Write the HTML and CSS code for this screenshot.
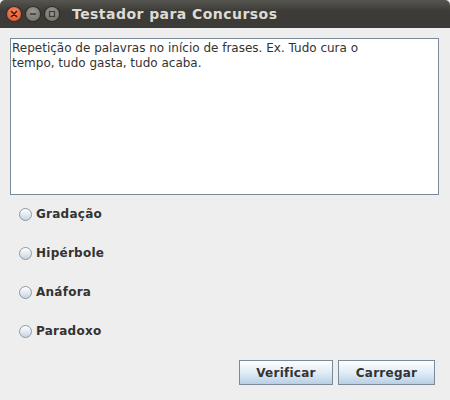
FILE: index.html
```html
<!DOCTYPE html>
<html>
<head>
<meta charset="utf-8">
<link rel="stylesheet" href="styles.css">
</head>
<body>
<div class="window">
  <div class="titlebar">
    <div class="controls">
      <span class="wbtn close"><svg width="14" height="14" viewBox="0 0 14 14"><path d="M4.5 4.5 L9.5 9.5 M9.5 4.5 L4.5 9.5" stroke="#3a1a10" stroke-width="1.6" stroke-linecap="round"/></svg></span>
      <span class="wbtn"><svg width="14" height="14" viewBox="0 0 14 14"><path d="M4 7 H10" stroke="#3c3b37" stroke-width="1.6"/></svg></span>
      <span class="wbtn"><svg width="14" height="14" viewBox="0 0 14 14"><rect x="4.5" y="4.5" width="5" height="5" fill="none" stroke="#3c3b37" stroke-width="1.2"/></svg></span>
    </div>
    <div class="title">Testador para Concursos</div>
  </div>
  <div class="content">
    <div class="textarea">Repetição de palavras no início de frases. Ex. Tudo cura o<br>tempo, tudo gasta, tudo acaba.</div>
    <div class="options">
      <label class="opt"><span class="radio"></span>Gradação</label>
      <label class="opt"><span class="radio"></span>Hipérbole</label>
      <label class="opt"><span class="radio"></span>Anáfora</label>
      <label class="opt"><span class="radio"></span>Paradoxo</label>
    </div>
    <div class="buttons">
      <button class="btn btn-v">Verificar</button>
      <button class="btn btn-c">Carregar</button>
    </div>
  </div>
</div>
</body>
</html>
```
FILE: styles.css
```css
html, body {
  margin: 0;
  padding: 0;
  background: #eeeeee;
}
.window {
  width: 450px;
  height: 400px;
  background: #eeeeee;
  display: flex;
  flex-direction: column;
}
.titlebar {
  height: 28px;
  background: linear-gradient(#57554f, #3c3b37 40%, #3c3b37);
  border-radius: 5px 5px 0 0;
  display: flex;
  align-items: center;
  box-sizing: border-box;
}
.controls {
  display: flex;
  gap: 5px;
  margin-left: 7px;
}
.wbtn {
  width: 14px;
  height: 14px;
  border-radius: 50%;
  background: radial-gradient(circle at 50% 35%, #9a9890, #6d6b65);
  display: block;
  box-shadow: 0 0 0 1px #2f2e2b;
}
.wbtn svg { display: block; }
.wbtn.close {
  background: radial-gradient(circle at 50% 35%, #f7855e, #e0501e);
}
.title {
  margin-left: 13px;
  font-family: "DejaVu Sans", sans-serif;
  font-weight: bold;
  font-size: 14px;
  letter-spacing: 0.45px;
  color: #dfdbd2;
}
.content {
  flex: 1;
  display: flex;
  flex-direction: column;
  padding: 10px 15px 0 10px;
}
.textarea {
  width: 429px;
  height: 157px;
  box-sizing: border-box;
  border: 1px solid #7a8a99;
  background: #ffffff;
  padding: 2px 1px;
  font-family: "DejaVu Sans", sans-serif;
  font-size: 12px;
  line-height: 15px;
  color: #333333;
}
.options {
  display: flex;
  flex-direction: column;
  margin-top: 11px;
  margin-left: 9px;
  gap: 23px;
}
.opt {
  display: flex;
  align-items: center;
  gap: 4px;
  height: 16px;
  font-family: "DejaVu Sans", sans-serif;
  font-weight: bold;
  font-size: 12px;
  letter-spacing: 0.25px;
  color: #333333;
}
.radio {
  width: 11px;
  height: 11px;
  border-radius: 50%;
  border: 1px solid #8a99a6;
  background: linear-gradient(#ffffff, #c8d4df);
  display: block;
}
.buttons {
  display: flex;
  justify-content: flex-end;
  gap: 5px;
  margin-top: 21px;
}
.btn {
  height: 25px;
  box-sizing: border-box;
  border: 1px solid #7a8a99;
  border-radius: 0;
  background: linear-gradient(#ffffff, #ddeaf6 55%, #b8cfe5);
  font-family: "DejaVu Sans", sans-serif;
  font-weight: bold;
  font-size: 12px;
  letter-spacing: 0.25px;
  color: #333333;
  padding: 0;
}
.btn-v { width: 94px; }
.btn-c { width: 97px; }
```
